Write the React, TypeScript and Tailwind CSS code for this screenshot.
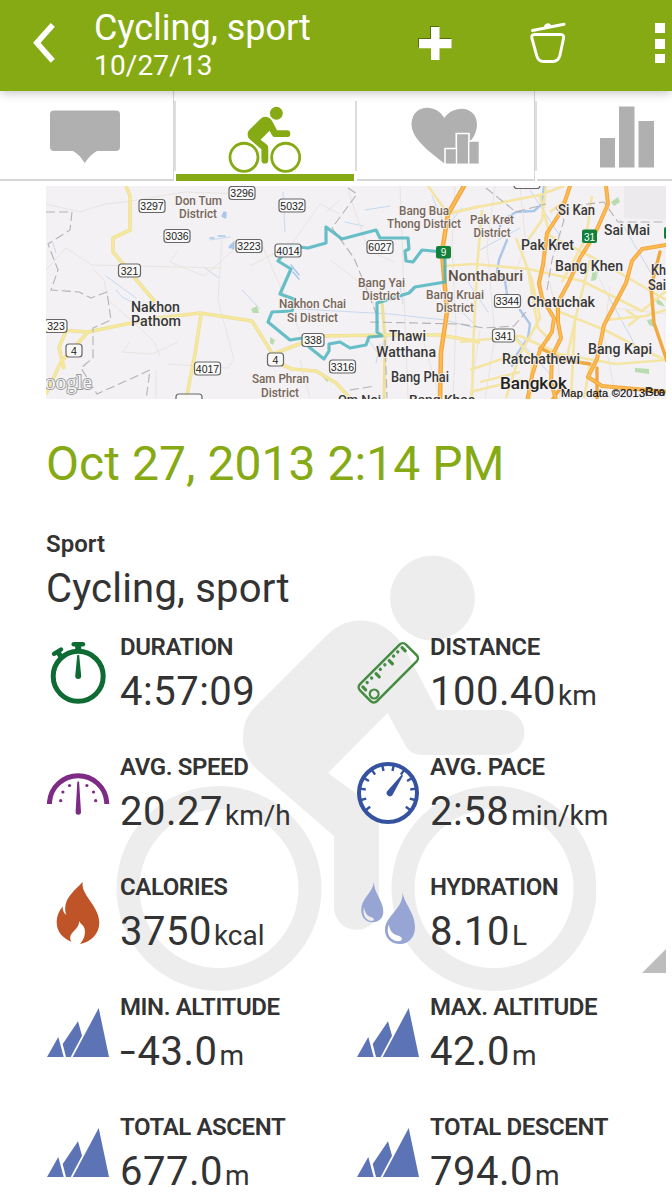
import type { ReactNode } from "react"

/* ---------- Header ---------- */

function Header() {
  return (
    <header className="relative z-10 flex h-[91px] items-start bg-[#86aa13] text-white shadow-[0_1px_10px_rgba(0,0,0,0.28)]">
      <svg className="mt-[22px] ml-[32px] shrink-0" width="24" height="42" viewBox="0 0 24 42" fill="none">
        <path d="M20.800 2.800 4.800 20.800 20.800 38.800" stroke="#fff" strokeWidth="5.600" />
      </svg>
      <div className="ml-[38px] w-[324px] shrink-0 pt-[8px]">
        <h1 className="text-[36px] leading-[41px]">Cycling, sport</h1>
        <p className="text-[28px] leading-[34px] tracking-[0.15px]">10/27/13</p>
      </div>
      <svg className="mt-[26px] shrink-0" width="36" height="36" viewBox="0 0 36 36">
        <path d="M12 0h9v12h12v9h-3v-8H12z M0 12h12v9H0z" fill="#44590a" opacity=".75" />
        <path d="M13 1h8.500v12h12v9.300h-12V34H13V22.300H1V13h12z" fill="#fff" />
      </svg>
      <svg className="mt-[20px] ml-[74px] shrink-0" width="42" height="46" viewBox="0 0 42 46" fill="none" stroke="#fff" strokeLinecap="round" strokeLinejoin="round">
        <path d="M4.500 10.500 36 4.300" strokeWidth="3" />
        <path d="M17.500 6.300a2.500 2.500 0 0 1 4-.8" strokeWidth="3" />
        <path d="M6.500 14.500H32.500Q36.500 14.500 35.500 18.500L32 35Q30.500 41.500 24.500 41.500H15.500Q10 41.500 8.500 35L4 18.500Q3 14.500 6.500 14.500Z" strokeWidth="2.900" />
      </svg>
      <div className="mt-[23px] ml-[85px] flex shrink-0 flex-col gap-[6px]">
        <span className="h-[10px] w-[10px] bg-white" />
        <span className="h-[10px] w-[10px] bg-white" />
        <span className="-mt-px h-[9px] w-[10px] bg-white" />
      </div>
    </header>
  )
}

/* ---------- Tabs ---------- */

function Divider() {
  return <span className="mt-[10px] h-[70px] w-[2px] shrink-0 bg-[#dedede]" />
}

function Tabs() {
  return (
    <nav className="flex h-[90px] bg-white">
      <div className="w-[174px] shrink-0 border-r border-b-2 border-[#d6d6d6]">
        <svg width="173" height="88" viewBox="0 91 173 88">
          <path d="M54 110.500H116a4 4 0 0 1 4 4V147a4 4 0 0 1-4 4H97Q91 154 84.700 163 79 154 73 151H54a4 4 0 0 1-4-4V114.500a4 4 0 0 1 4-4Z" fill="#b0b0b0" />
        </svg>
      </div>
      <Divider />
      <div className="w-[178px] shrink-0 border-b-[7px] border-[#86aa13]">
        <svg width="178" height="83" viewBox="176 91 178 83">
          <g transform="translate(210.800 22.600) scale(.1516)">
            <Cyclist fill="#86aa13" strokeWidth={18.500} radius={92.500} />
          </g>
        </svg>
      </div>
      <span className="w-px shrink-0" />
      <Divider />
      <div className="w-[178px] shrink-0 border-r border-b-2 border-[#d6d6d6]">
        <svg width="177" height="88" viewBox="357 91 177 88">
          <path d="M444.300 118C452 105 477 104 477 125 476.500 142 458 153 444.300 163.500 430 152 411.500 139 411.500 124 412 104 436 103 444.300 118Z" fill="#b0b0b0" />
          <path d="M445 164.500V148.500H456.300V133.500H469V141H479.500V164.500Z" fill="#b0b0b0" stroke="#fff" strokeWidth="1.600" />
          <path d="M456.500 148V164.500M468.700 141V164.500M444 164.500H480" stroke="#fff" strokeWidth="1.400" />
        </svg>
      </div>
      <Divider />
      <div className="w-[135px] shrink-0 border-b-2 border-[#d6d6d6]">
        <svg width="135" height="88" viewBox="537 91 135 88" fill="#b0b0b0">
          <path d="M600 138h15v29.500h-15zM619 106.500h15.500v61H619zM638.500 121H654v46.500h-15.500z" />
        </svg>
      </div>
    </nav>
  )
}

/* The rider is shared by the active tab and the watermark. */
function Cyclist({ fill, strokeWidth, radius }: { fill: string; strokeWidth: number; radius: number }) {
  return (
    <g fill={fill}>
      <circle cx="432.500" cy="598" r="42.500" />
      <path d="M502 710H437L409 657C399 635 382 620.500 361 620.500 345 620.500 335 627 325 637L255 707C247 715 243 725 243 738 243 753 249 763 261 773L334 836V907.500A22.500 22.500 0 0 0 379 907.500V832C379 814 376 808 365 800L328 773 387.500 713 404 743C409 752 414 755 424 755H502A22.500 22.500 0 0 0 502 710Z" />
      <circle cx="219" cy="888.500" r={radius} fill="none" stroke={fill} strokeWidth={strokeWidth} />
      <circle cx="494" cy="888.500" r={radius} fill="none" stroke={fill} strokeWidth={strokeWidth} />
    </g>
  )
}

/* ---------- Map ---------- */

type Label = [text: string, x: number, y: number, width: number, size: number, color: string]

const BROWN = "#76665a"
const DARK = "#383838"

const labels: Label[] = [
  ["Don Tum", 175, 205, 47, 12.500, BROWN],
  ["District", 179, 217.500, 38, 12.500, BROWN],
  ["Nakhon", 131, 311.500, 49, 14.500, DARK],
  ["Pathom", 131, 326, 50, 14.500, DARK],
  ["Bang Bua", 399, 214.500, 50, 12.500, BROWN],
  ["Thong District", 387, 227.500, 74, 12.500, BROWN],
  ["Pak Kret", 470, 224, 44, 12.500, BROWN],
  ["District", 473.500, 237, 37, 12.500, BROWN],
  ["Bang Yai", 358, 287, 47, 12.500, BROWN],
  ["District", 362, 300, 38, 12.500, BROWN],
  ["Nakhon Chai", 279, 308, 67, 12.500, BROWN],
  ["Si District", 287, 322, 51, 12.500, BROWN],
  ["Bang Kruai", 426, 299, 58, 12.500, BROWN],
  ["District", 436, 311.500, 38, 12.500, BROWN],
  ["Sam Phran", 252, 383, 57, 12.500, BROWN],
  ["District", 261, 396.500, 38, 12.500, BROWN],
  ["Nonthaburi", 448, 280.500, 75, 14.500, "#5c5047"],
  ["Si Kan", 558, 215, 37, 14, DARK],
  ["Sai Mai", 604, 234.500, 46, 14, DARK],
  ["Pak Kret", 521, 250, 53, 14, DARK],
  ["Bang Khen", 555, 270.500, 68, 14, DARK],
  ["Kh", 651, 275, 15, 14, DARK],
  ["Sai", 648, 290, 18, 14, DARK],
  ["Chatuchak", 527, 306.500, 68, 14, DARK],
  ["Thawi", 389, 341, 37, 14, DARK],
  ["Watthana", 376, 357, 60, 14, DARK],
  ["Ratchathewi", 502, 363.500, 78, 14, DARK],
  ["Bang Kapi", 588, 354, 64, 14, DARK],
  ["Bang Phai", 391, 381.500, 58, 14, DARK],
  ["Om Noi", 338, 404, 43, 13.500, DARK],
  ["Bang Khae", 409, 404, 66, 13.500, DARK],
  ["Bangkok", 500, 388.500, 67, 16.500, "#222"],
]

const shields: [string, number, number][] = [
  ["3297", 152, 206],
  ["3296", 242, 193],
  ["3036", 177, 236],
  ["5032", 292, 205.500],
  ["3223", 249, 246],
  ["4014", 288, 250.500],
  ["6027", 380, 247],
  ["321", 129.500, 270.500],
  ["323", 56, 326],
  ["4", 74, 350.500],
  ["4", 275.500, 359.500],
  ["338", 313, 340],
  ["4017", 207.500, 368.500],
  ["3316", 342.500, 366.500],
  ["3344", 507.500, 301],
  ["341", 503.500, 335.500],
  ["", 189, 400.500],
  ["", 527, 182],
]

function RouteMap() {
  return (
    <svg className="block" width="620" height="213" viewBox="46 186 620 213" fontFamily="Roboto, sans-serif">
      <rect x="46" y="186" width="620" height="213" fill="#f3f1f4" />

      {/* built-up areas, parks */}
      <path d="M624 186h42v34l-42-2z" fill="#eceaed" />
      <path d="M611 202l7-5 2 5-6 4zM592 273l6-2-2 9-5 1zM655 297l7 5 3 5-8-3zM647 320l5-1 2 8-5-2zM635 368l14 1v5l-14-2zM251 309l6-3 2 7-6 0zM270 337l5 3-2 5-3-2zM322 376l8 2-3 4z" fill="#b9dcae" />

      {/* water */}
      <g fill="none" stroke="#a9c7ea" strokeLinecap="round">
        <path d="M544 186l-2 18-8 7-18 1-15 10-3 13M507 240l-8 20-2 12 8 8 3 22M520 310l10 14-2 14-11 16-5 12" strokeWidth="2.400" />
        <path d="M106 276l30 22M116 290l6 7 10 5M242 290l18 19M205 268l14 10M210 240l20-3M53 243l3 10M285 232l-2-40M300 309l90 5 55 6 30 8M400 286l3 18M365 335l12 17 12-18M380 344l-4 19M345 222l18 4M365 210l25-4M432 196l14 32 16-20M440 290l38 38M480 250l40-22M530 190l30 46M468 282l20 30M510 330l40 44M620 220l35 60M605 290l36 66" strokeWidth=".6" />
        <path d="M223 216l2-4v5M230 247l3-3v4" strokeWidth="3" />
        <path d="M225 236h-7M210 238h4M291 265l8 10M293 272l6 7" strokeWidth="1.500" />
      </g>

      {/* local roads */}
      <g fill="none" stroke="#e6e2dd" strokeWidth=".9">
        <path d="M46 204l34 8 25-8 20-2 60-10 62 2M46 270l20-22 26 17 130 3M92 268l12 12 4 20 34 30 12 12 6 14M178 250l-8 12 34 14 14-12 18-16M222 240l-4 60 16 60-6 8-60-4M130 342l-8 10 30 2 26-12M156 370v30M250 266l42-22 28-40 20 10M340 200l-14 12M400 186l8 212M455 186l-3 60 4 80-3 73M495 186l-8 60 8 90-10 63M330 260l40 30 10 42M260 240l40 92M300 360l10 38M610 286l-6 50 12 62M540 240l16 70 4 90M580 240l34 68 52 6M520 186l6 60-26 60M420 330l20 68M480 330l-10 68M348 190l20 60 26 12" />
      </g>

      {/* secondary roads */}
      <g fill="none" stroke="#eedf9a" strokeWidth="3.600" strokeLinejoin="round">
        <path d="M126 186l4 10v34l-17 8v14l42 50" />
        <path d="M46 329l42 3 62-13 50-6 52 8 10 16 16 26 14 6 24 2 20 12 26 28" />
        <path d="M88 332l-27 30-15 32M66 331l-7 16 5 22M201 314l-6 40-9 46" />
        <path d="M268 356l52-20 65-1 55 0 40 7" />
        <path d="M382 300l3 40-1 60" strokeWidth="3" />
      </g>
      <g fill="none" stroke="#f7e99b" strokeWidth="2" strokeLinejoin="round">
        <path d="M126 186l4 10v34l-17 8v14l42 50M46 329l42 3 62-13 50-6 52 8 10 16 16 26 14 6 24 2 20 12 26 28M88 332l-27 30-15 32M66 331l-7 16 5 22M201 314l-6 40-9 46M268 356l52-20 65-1 55 0 40 7" />
      </g>
      <g fill="none" stroke="#f4e5a4" strokeWidth="2.600" strokeLinejoin="round">
        <path d="M428 186l20 28 30-7 62-12 24-9M446 214l34-8M444 266l30-2 54 5 54 12 60 30 24-20M460 342l60-6 40 18 56 10 50-4M482 210l-5 58-3 60-2 72M516 238l16 42 8 38-20 36-14 44M540 196l10 40 44 22 24 14 48 28M592 196l-6 42-24 44M528 270l10 58 12 12M508 330l24 28-2 42M590 260l-14 56-10 46M555 310l50 20 42 22 19 8M470 370l40-14 40 4M470 392l50-12 40 6M605 320l40-4 21-6M546 186l-4 34-14 20" />
        <path d="M550 212l16-12M626 310l12 8-10 8M575 320l-4 78M590 364l-6 34M520 372l-40 10" />
      </g>

      {/* highways */}
      <g fill="none" stroke="#f0a83f" strokeLinejoin="round" strokeLinecap="round">
        <path d="M464 186l-16 28-6 38 5 60-6 40-1 50" strokeWidth="4.600" />
        <path d="M570 186l-8 24-15 23-4 32-4 18 3 15 12 20-2 14-12 18-8 26-5 26M606 186l2 18-14 32-14 22-12 26-10 18 0 20 3 16-9 18-1 26 5 18M666 245l-24 4-10 12-6 22-22 42-7 34-9 18 14 9 68 6" strokeWidth="4" />
        <path d="M660 252l-9 35 3 36 13 38M540 348l24 12 26 4M552 400l10-14M597 368v32" strokeWidth="3.400" />
      </g>
      <g fill="none" stroke="#ffbb52" strokeWidth="2">
        <path d="M464 186l-16 28-6 38 5 60-6 40-1 50M570 186l-8 24-15 23-4 32-4 18 3 15 12 20-2 14-12 18-8 26-5 26M606 186l2 18-14 32-14 22-12 26-10 18 0 20 3 16-9 18-1 26 5 18M666 245l-24 4-10 12-6 22-22 42-7 34-9 18 14 9 68 6" />
      </g>

      {/* boundaries */}
      <g fill="none" stroke="#b5b1b4" strokeWidth="1.100" strokeDasharray="9 4">
        <path d="M46 212h26l-2 18-22 14 10 26-7 20 28 2 12 6 16-6 4 28-18 8 0 30-12 10 16 26 40-18 13-6-4 30" />
        <path d="M348 188l9 6-25 34 22 30 22 55M370 322l90 2 24 4 30-2 12-14M547 290l5-30 12-40-8-12 48-6 14 20h48M486 188l30 24 30-8M385 340l2 58M350 390l25-4" />
      </g>

      {/* recorded track */}
      <path
        d="M443 252L422 250 413 262 406 261 405 251 409 249 408 238H380L376 230 342 239 326 227V243L308 248 289 246 278 261 291 269 280 294 294 299V305L292 311 272 312 268 322 290 340 309 337V347L324 359 329 351 329 344 340 342 350 348 366 345 369 337 382 336 377 332V303L409 293 415 287 445 282V255"
        fill="none"
        stroke="#45b1bb"
        strokeOpacity=".8"
        strokeWidth="3.200"
        strokeLinejoin="round"
      />

      {/* road shields */}
      {shields.map(([text, x, y], i) => {
        const w = text.length > 3 ? 26 : text.length === 3 ? 22 : text.length ? 16 : 26
        return (
          <g key={i}>
            <rect x={x - w / 2} y={y - 6.500} width={w} height="13" rx="3" fill="#fafafa" fillOpacity=".9" stroke="#666" strokeWidth="1.200" />
            <text x={x} y={y + 4.300} textAnchor="middle" fontSize="10.500" fill="#222" fontFamily="Liberation Sans, sans-serif">
              {text}
            </text>
          </g>
        )
      })}
      <g fill="#13803a" fontSize="10" fontFamily="Liberation Sans, sans-serif">
        <rect x="436" y="246" width="15" height="12.500" rx="2" />
        <rect x="582" y="229.500" width="15" height="13.500" rx="2" />
        <rect x="664" y="227" width="6" height="12" rx="2" />
        <text x="440.700" y="256" fill="#fff">9</text>
        <text x="584" y="240.500" fill="#fff">31</text>
      </g>

      {/* place names */}
      {labels.map(([text, x, y, width, size, color]) => (
        <text key={`${text}-${x}`} x={x} y={y} textLength={width} lengthAdjust="spacingAndGlyphs" fontSize={size} fill={color} fontWeight="500" stroke="#f6f4f5" strokeOpacity=".8" strokeWidth="2" strokeLinejoin="round" paintOrder="stroke">
          {text}
        </text>
      ))}

      <text x="45" y="388.500" fontSize="21" textLength="47" lengthAdjust="spacingAndGlyphs" fontFamily="Liberation Serif, serif" fill="#f4f4f4" stroke="#999" strokeWidth="1.800" paintOrder="stroke">
        oogle
      </text>
      <text x="561" y="397" fontSize="11" textLength="84" fill="#111" stroke="#111" strokeWidth=".2" fontFamily="Liberation Sans, sans-serif">
        Map data ©2013
      </text>
      <text x="645" y="396" fontSize="11" textLength="20" fill="#111" fontFamily="Liberation Sans, sans-serif">
        Goo
      </text>
      <text x="645" y="396" fontSize="12.500" textLength="20" fill="#333" fontWeight="500">
        Pra
      </text>
    </svg>
  )
}

/* ---------- Stat icons ---------- */

function Icon({ children }: { children: ReactNode }) {
  return (
    <svg className="mt-[9px] shrink-0" width="64" height="64" viewBox="0 0 64 64" fill="none">
      {children}
    </svg>
  )
}

function StopwatchIcon() {
  return (
    <Icon>
      <g stroke="#0e6b34">
        <circle cx="32.200" cy="35.300" r="25" strokeWidth="5" />
        <path d="M27.700 3.200H37" strokeWidth="4.400" strokeLinecap="round" />
        <path d="M32.200 4v7" strokeWidth="6" />
        <path d="M8 12.800 15 8.500" strokeWidth="4.400" strokeLinecap="round" />
        <path d="M11.500 10.500l4 6" strokeWidth="5" />
      </g>
      <path d="M31.200 14.500q1-1.500 2 0L35.200 35a3 3 0 0 1-6 0Z" fill="#0e6b34" />
    </Icon>
  )
}

function SpeedIcon() {
  return (
    <Icon>
      <path d="M3.500 43V41A28.700 28.700 0 0 1 60.700 41V43" stroke="#7d2b85" strokeWidth="5" />
      <g fill="#7d2b85">
        <path d="M31.300 21q.9-1.500 1.800 0L35 51a2.700 2.700 0 0 1-5.400 0Z" />
        <circle cx="14.700" cy="39.700" r="1.600" />
        <circle cx="16.900" cy="31" r="1.600" />
        <circle cx="23.500" cy="24.500" r="1.600" />
        <circle cx="40.900" cy="24.500" r="1.600" />
        <circle cx="47.500" cy="31" r="1.600" />
        <circle cx="49.700" cy="39.700" r="1.600" />
      </g>
    </Icon>
  )
}

function RulerIcon() {
  return (
    <Icon>
      <g transform="translate(32.300 31.800) rotate(-45)" stroke="#458b41" strokeLinecap="round">
        <rect x="-32.500" y="-12" width="65" height="24" rx="4.500" strokeWidth="2.500" />
        <path d="M-28-8v4M-9.300-8v4.500M9.300-8v4.500M27.500-8v4.500" strokeWidth="3.200" />
        <path d="M-21.800-8.200v.2M-15.500-8.200v.2M-3.200-8.200v.2M3.200-8.200v.2M15.500-8.200v.2M21.500-8.200v.2" strokeWidth="3.200" />
        <circle cx="-25" cy="5" r="4.400" strokeWidth="2.200" />
      </g>
    </Icon>
  )
}

const paceTicks = [-127.500, -104.500, -81, -58, -35, -11.600, 11.600, 35, 58, 81, 104.500, 127.500]

function PaceIcon() {
  return (
    <Icon>
      <circle cx="32" cy="32" r="29" fill="#fff" stroke="#34529f" strokeWidth="4" />
      {paceTicks.map((angle) => (
        <path key={angle} d="M32 4V9.500" stroke="#34529f" strokeWidth="2.400" transform={`rotate(${angle} 32 32)`} />
      ))}
      <path d="M45.500 14q1.500-.5 1.300 1L36.500 34a3.300 3.300 0 0 1-5.600-3.400Z" fill="#34529f" />
    </Icon>
  )
}

function FlameIcon() {
  return (
    <Icon>
      <path
        d="M36.700 1C34.500 14 53.300 25 53.300 41.500 53.300 53 45 61 34 63 39 57 39.500 52 38.500 47.500 37.500 44 35 43.500 33 40 34 49 20 52 25.500 60.700 16 57 10.700 50 10.700 41.500 10.700 35 13 30 16.700 25.500 16.500 29 17.500 32 20.200 34 16 19 27 11 36.700 1Z"
        fill="#bf5428"
      />
    </Icon>
  )
}

function DropsIcon() {
  return (
    <Icon>
      <g fill="#96a5d4">
        <path d="M18 1.300C17.500 11 27.300 20 27.300 30.500 27.300 37 23 41.300 16.300 41.300 9.500 41.300 5.300 36 5.300 29 5.300 17 16 13 18 1.300Z" />
        <path d="M46.300 9C47 22 59 31 59 46 59 56 53 63 44 63 35 63 29 57 29 49 29 34 49 28 46.300 9Z" />
      </g>
      <path d="M8 26.500C6.500 32 8 38.500 15 40 20 40 18 36.500 14.500 36 10.500 34.500 9 31 8 26.500Z" fill="#ededed" />
      <path d="M33 43.500C30 50 32 59 42 60.300 48 60 46.500 55.500 41.500 54.500 35.500 52.500 33.500 48.500 33 43.500Z" fill="#fff" />
    </Icon>
  )
}

function MountainsIcon() {
  return (
    <Icon>
      <path d="M1 56 12.300 36 17.700 56ZM20 56 16.700 43 32 20.300 36 34.700 24.700 56ZM26.700 56 52.700 7 63 56Z" fill="#5c74b5" />
    </Icon>
  )
}

/* ---------- Stats ---------- */

const stats = [
  { label: "DURATION", value: "4:57:09", unit: "", icon: <StopwatchIcon /> },
  { label: "DISTANCE", value: "100.40", unit: "km", icon: <RulerIcon /> },
  { label: "AVG. SPEED", value: "20.27", unit: "km/h", icon: <SpeedIcon /> },
  { label: "AVG. PACE", value: "2:58", unit: "min/km", icon: <PaceIcon /> },
  { label: "CALORIES", value: "3750", unit: "kcal", icon: <FlameIcon /> },
  { label: "HYDRATION", value: "8.10", unit: "L", icon: <DropsIcon /> },
  { label: "MIN. ALTITUDE", value: "-43.0", unit: "m", icon: <MountainsIcon /> },
  { label: "MAX. ALTITUDE", value: "42.0", unit: "m", icon: <MountainsIcon /> },
  { label: "TOTAL ASCENT", value: "677.0", unit: "m", icon: <MountainsIcon /> },
  { label: "TOTAL DESCENT", value: "794.0", unit: "m", icon: <MountainsIcon /> },
]

function Stats() {
  return (
    <section className="grid grid-cols-[310px_310px] auto-rows-[120px]">
      {stats.map(({ label, value, unit, icon }) => {
        const negative = value.startsWith("-")
        return (
          <div key={label} className="flex">
            {icon}
            <div className="ml-[10px] whitespace-nowrap text-[#333]">
              <h3 className="text-[24px] leading-[30px] font-semibold tracking-[-0.4px]">{label}</h3>
              <p className="mt-[6px] text-[40px] leading-[48px] tracking-[0.5px]">
                {negative && <span className="inline-block w-[17.500px] origin-left scale-x-[1.4]">-</span>}
                {negative ? value.slice(1) : value}
                {unit && <span className="ml-[2px] text-[28px] tracking-[0px]">{unit}</span>}
              </p>
            </div>
          </div>
        )
      })}
    </section>
  )
}

export default function App() {
  return (
    <div className="relative h-[1200px] w-[672px] overflow-hidden bg-white font-['Roboto',sans-serif]">
      <Header />
      <Tabs />
      {/* rider watermark behind the stats */}
      <svg className="pointer-events-none absolute top-0 left-0" width="596" height="1200" viewBox="0 0 596 1200" aria-hidden="true">
        <Cyclist fill="#ededed" strokeWidth={23} radius={91} />
      </svg>
      <main className="relative pt-[5px] pl-[46px]">
        <RouteMap />
        <h2 className="mt-[36px] text-[48px] leading-[58px] tracking-[0.05px] text-[#86aa13]">Oct 27, 2013 2:14 PM</h2>
        <h3 className="mt-[36px] text-[24px] leading-[30px] font-semibold text-[#333]">Sport</h3>
        <p className="mt-[6px] mb-[19px] text-[40px] leading-[48px] tracking-[0.2px] text-[#333]">Cycling, sport</p>
        <Stats />
      </main>
      <span className="absolute top-[949px] left-[642px] h-[24px] w-[24px] bg-[#bdbdbd] [clip-path:polygon(100%_0,100%_100%,0_100%)]" />
    </div>
  )
}
